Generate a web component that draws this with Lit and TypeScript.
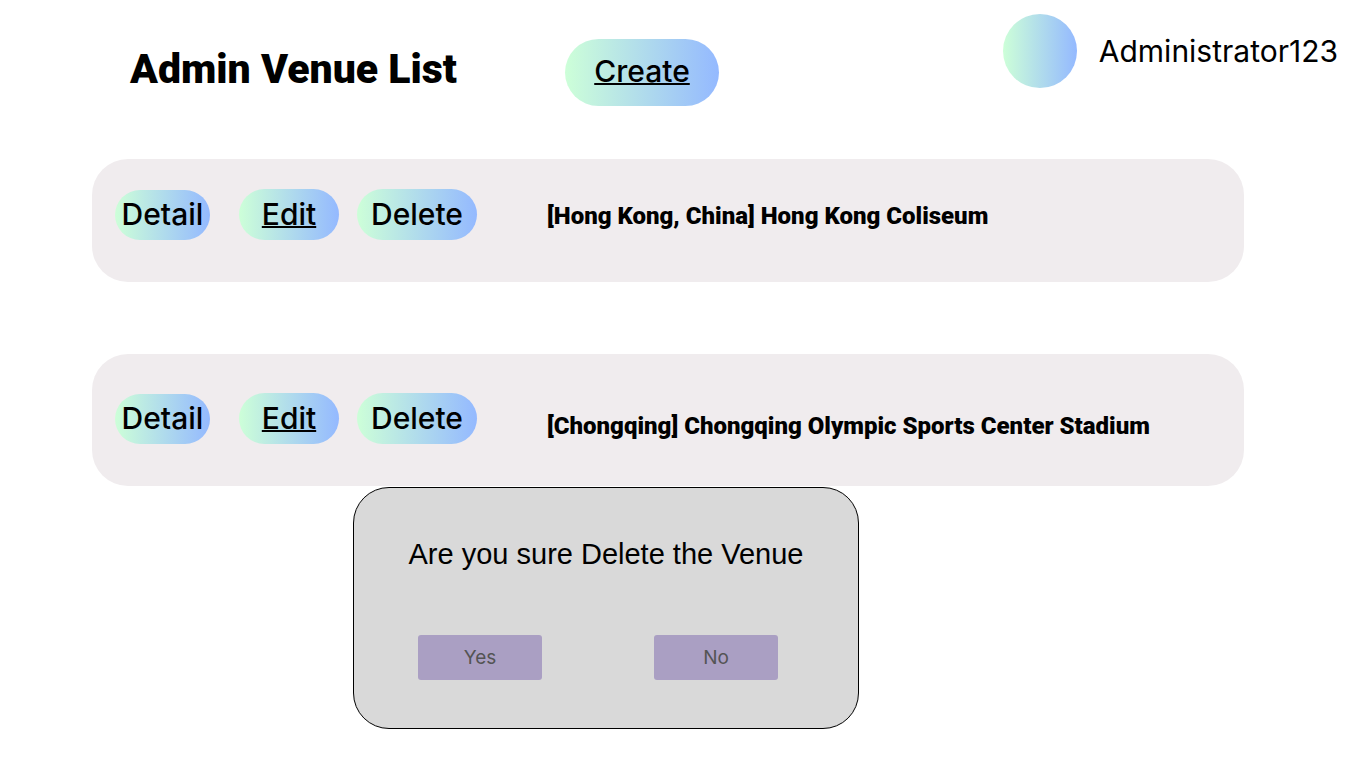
import { LitElement, html, css } from "lit";
import { customElement, property, state } from "lit/decorators.js";
import { classMap } from "lit/directives/class-map.js";

interface Venue {
  region: string;
  name: string;
}

@customElement("venue-row")
export class VenueRow extends LitElement {
  @property({ attribute: false }) venue!: Venue;
  @property({ type: Boolean }) pending = false;

  static styles = css`
    :host {
      display: block;
      color: #000;
    }
    .card {
      display: flex;
      align-items: flex-start;
      padding: 30px 23px 39px;
      background: #f0ecee;
      border-radius: 36px;
    }
    .card.pending {
      padding: 39px 23px 36px;
    }
    .actions {
      display: flex;
      align-items: center;
    }
    .pill {
      display: flex;
      align-items: center;
      justify-content: center;
      box-sizing: border-box;
      margin: 0;
      padding: 0 0 2px;
      border: 0;
      border-radius: 26px;
      background: linear-gradient(90deg, #cdffd8, #94b9ff);
      color: inherit;
      font: 500 30px/36px Inter, sans-serif;
      white-space: nowrap;
      cursor: pointer;
    }
    .detail {
      width: 95px;
      height: 50px;
    }
    .edit {
      width: 100px;
      height: 51px;
      margin-left: 29px;
      text-decoration: underline;
      text-decoration-skip-ink: none;
      text-decoration-thickness: 2px;
      text-underline-offset: 1px;
    }
    .delete {
      width: 120px;
      height: 51px;
      margin-left: 18px;
    }
    .name {
      margin: 0 0 0 70px;
      font: 900 24px/54px Roboto, sans-serif;
    }
    .pending .name {
      padding-top: 10px;
      line-height: 47px;
    }
  `;

  private askDelete() {
    this.dispatchEvent(new CustomEvent("ask-delete"));
  }

  render() {
    return html`
      <article class=${classMap({ card: true, pending: this.pending })}>
        <div class="actions">
          <button class="pill detail" type="button">Detail</button>
          <a class="pill edit" href="#edit">Edit</a>
          <button class="pill delete" type="button" @click=${this.askDelete}>Delete</button>
        </div>
        <h2 class="name">[${this.venue.region}] ${this.venue.name}</h2>
      </article>
    `;
  }
}

@customElement("app-root")
export class AppRoot extends LitElement {
  @state() private pending = 1;

  private venues: Venue[] = [
    { region: "Hong Kong, China", name: "Hong Kong Coliseum" },
    { region: "Chongqing", name: "Chongqing Olympic Sports Center Stadium" },
  ];

  static styles = css`
    :host {
      display: block;
      min-height: 100vh;
      background: #fff;
      color: #000;
      font-family: Inter, sans-serif;
    }
    .top {
      display: flex;
      align-items: flex-start;
      padding: 14px 28px 0 130px;
    }
    .title {
      margin: 0;
      padding-top: 31px;
      font: 900 41px/48px Roboto, sans-serif;
      flex: 0 0 435px;
    }
    .create {
      display: block;
      box-sizing: border-box;
      width: 154px;
      height: 67px;
      margin-top: 25px;
      padding-bottom: 2px;
      border-radius: 34px;
      background: linear-gradient(90deg, #cdffd8, #94b9ff);
      color: inherit;
      font-size: 30px;
      font-weight: 500;
      line-height: 64px;
      text-align: center;
      text-decoration: underline;
      text-decoration-skip-ink: none;
      text-decoration-thickness: 2px;
      text-underline-offset: 1px;
    }
    .user {
      display: flex;
      align-items: center;
      gap: 22px;
      margin-left: auto;
      font-size: 30px;
      line-height: 36px;
    }
    .avatar {
      width: 74px;
      height: 74px;
      border-radius: 50%;
      background: linear-gradient(90deg, #cdffd8, #94b9ff);
    }
    .list {
      display: flex;
      flex-direction: column;
      gap: 72px;
      padding: 53px 122px 0 92px;
    }
    .dialog {
      box-sizing: border-box;
      width: 506px;
      margin: 0 auto;
      padding: 48px 50px;
      border: 1px solid #000;
      border-radius: 36px;
      background: #d9d9d9;
    }
    .confirm {
      padding: 1px 154px 24px 0;
    }
    .question {
      margin: 0;
      font: 400 29px/36px "Liberation Sans", Arial, sans-serif;
      text-align: center;
      white-space: nowrap;
    }
    .answers {
      display: flex;
      justify-content: space-between;
      padding: 63px 30px 0 14px;
    }
    .answer {
      width: 124px;
      height: 45px;
      padding: 0;
      border: 0;
      border-radius: 3px;
      background: #aa9fc3;
      color: #545454;
      font: 400 19px/24px Inter, sans-serif;
      cursor: pointer;
    }
  `;

  private close() {
    this.pending = -1;
  }

  render() {
    return html`
      <header class="top">
        <h1 class="title">Admin Venue List</h1>
        <a class="create" href="#create">Create</a>
        <div class="user">
          <span class="avatar"></span>
          <span>Administrator123</span>
        </div>
      </header>
      <main>
        <section class="list">
          ${this.venues.map(
            (venue, i) => html`<venue-row
              .venue=${venue}
              ?pending=${this.pending === i}
              @ask-delete=${() => (this.pending = i)}
            ></venue-row>`
          )}
        </section>
        ${this.pending >= 0
          ? html`<div class="confirm">
              <section class="dialog" role="alertdialog" aria-labelledby="question">
                <p class="question" id="question">Are you sure Delete the Venue</p>
                <div class="answers">
                  <button class="answer" type="button" @click=${this.close}>Yes</button>
                  <button class="answer" type="button" @click=${this.close}>No</button>
                </div>
              </section>
            </div>`
          : null}
      </main>
    `;
  }
}
